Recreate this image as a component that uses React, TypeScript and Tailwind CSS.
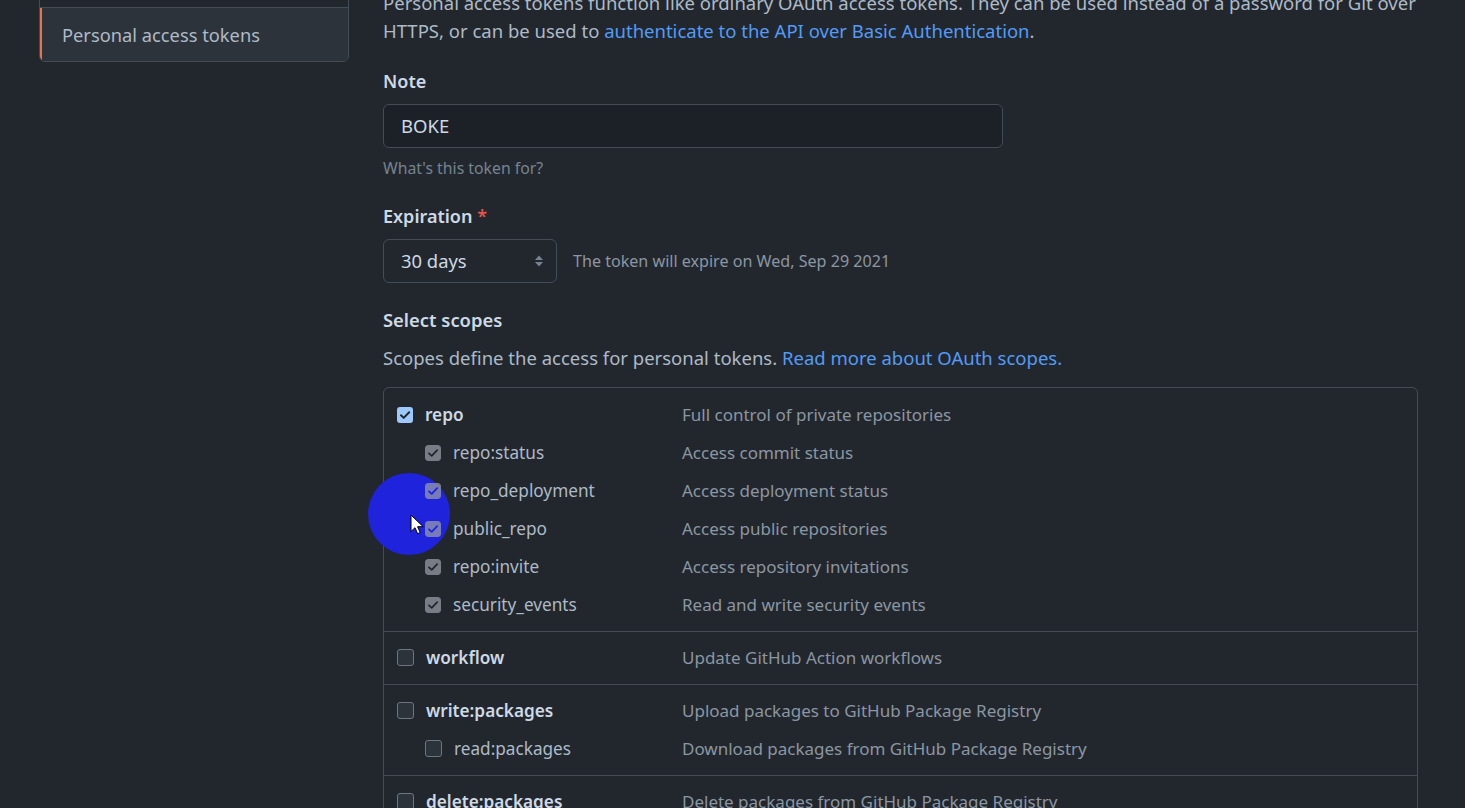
import React from 'react';

type Scope = { name: string; desc: string; state: 'on' | 'sub' | 'off'; child?: boolean };

const sections: Scope[][] = [
  [
    { name: 'repo', desc: 'Full control of private repositories', state: 'on' },
    { name: 'repo:status', desc: 'Access commit status', state: 'sub', child: true },
    { name: 'repo_deployment', desc: 'Access deployment status', state: 'sub', child: true },
    { name: 'public_repo', desc: 'Access public repositories', state: 'sub', child: true },
    { name: 'repo:invite', desc: 'Access repository invitations', state: 'sub', child: true },
    { name: 'security_events', desc: 'Read and write security events', state: 'sub', child: true },
  ],
  [{ name: 'workflow', desc: 'Update GitHub Action workflows', state: 'off' }],
  [
    { name: 'write:packages', desc: 'Upload packages to GitHub Package Registry', state: 'off' },
    { name: 'read:packages', desc: 'Download packages from GitHub Package Registry', state: 'off', child: true },
  ],
  [{ name: 'delete:packages', desc: 'Delete packages from GitHub Package Registry', state: 'off' }],
];

function Checkbox({ state, id }: { state: Scope['state']; id: string }) {
  if (state === 'on') {
    return (
      <svg width="16" height="16" viewBox="0 0 16 16" className="shrink-0">
        <rect width="16" height="16" rx="3" fill="#9ec9ff" />
        <path d="M4 8.3l2.7 2.6L12.2 5.2" stroke="#22272e" strokeWidth="2" fill="none" strokeLinecap="round" strokeLinejoin="round" />
      </svg>
    );
  }
  if (state === 'sub') {
    return (
      <svg width="16" height="16" viewBox="0 0 16 16" className="shrink-0">
        <defs>
          <mask id={id}>
            <rect width="16" height="16" rx="3" fill="white" />
            <path d="M4 8.3l2.7 2.6L12.2 5.2" stroke="black" strokeWidth="1.8" fill="none" strokeLinecap="round" strokeLinejoin="round" />
          </mask>
        </defs>
        <rect width="16" height="16" rx="3" fill="#9aa0a7" fillOpacity="0.72" mask={`url(#${id})`} />
      </svg>
    );
  }
  return <span className="block w-[17px] h-[17px] shrink-0 rounded-[3px] border border-[#6e7681] bg-[#2d333b]" />;
}

export default function App() {
  return (
    <div
      className="min-h-screen h-[808px] overflow-hidden bg-[#22272e] text-[#adbac7] flex"
      style={{ fontFamily: '"Noto Sans", "Open Sans", sans-serif' }}
    >
      {/* sidebar */}
      <div className="ml-[39px] w-[310px] shrink-0 -mt-[47px] self-start rounded-md border border-[#444c56] overflow-hidden">
        <div className="h-[54px] flex items-center pl-[22px] text-[18.3px] border-b border-[#444c56]">OAuth Apps</div>
        <div className="h-[53px] -ml-px flex items-center pl-[20px] border-l-[3px] border-[#e5774f] bg-[#2d333b] text-[18.3px]">
          Personal access tokens
        </div>
      </div>

      {/* main */}
      <div className="ml-[34px] w-[1035px] shrink-0 -mt-[11px]">
        <p className="text-[18.5px] leading-[28px] whitespace-nowrap">
          Personal access tokens function like ordinary OAuth access tokens. They can be used instead of a password for Git over
          <br />
          HTTPS, or can be used to <span className="text-[#539bf5]">authenticate to the API over Basic Authentication</span>.
        </p>

        <div className="mt-[24px] leading-[24px] text-[18px] font-semibold text-[#cdd9e5]">Note</div>
        <div className="mt-[11px] h-[44px] w-[620px] rounded-md border border-[#444c56] bg-[#1c2128] flex items-center px-[17px] text-[18.5px] text-[#cdd9e5]">
          BOKE
        </div>
        <div className="mt-[10px] leading-[20px] text-[15.8px] text-[#768390]">What's this token for?</div>

        <div className="mt-[26px] leading-[24px] text-[18px] font-semibold text-[#cdd9e5]">
          Expiration <span className="text-[#e5534b]">*</span>
        </div>
        <div className="mt-[11px] flex items-center gap-[16px]">
          <div className="h-[44px] w-[174px] rounded-md border border-[#444c56] bg-[#22272e] flex items-center justify-between pl-[17px] pr-[12px] text-[18.4px] text-[#cdd9e5]">
            30 days
            <svg width="10" height="16" viewBox="0 0 10 16">
              <path d="M5 2.5L9 7H1z" fill="#768390" />
              <path d="M5 13.5L1 9h8z" fill="#768390" />
            </svg>
          </div>
          <span className="text-[16.1px] text-[#8b96a2]">The token will expire on Wed, Sep 29 2021</span>
        </div>

        <div className="mt-[25px] leading-[24px] text-[18.4px] font-semibold text-[#cdd9e5]">Select scopes</div>
        <p className="mt-[12px] leading-[28px] text-[18.5px]">
          Scopes define the access for personal tokens. <span className="text-[#539bf5]">Read more about OAuth scopes.</span>
        </p>

        <div className="relative mt-[15px] rounded-t-md border border-[#444c56]">
          {/* screen-recording click highlight */}
          <div className="absolute left-[-16px] top-[85px] w-[82px] h-[82px] rounded-full bg-[#1f23dc] z-10" />
          {sections.map((sec, si) => (
            <div
              key={si}
              className={`relative z-20 pl-[13px] ${si === 0 ? 'pt-[8px] pb-[7px]' : 'py-[7px] border-t border-[#444c56]'}`}
            >
              {sec.map((s) => (
                <div key={s.name} className="h-[38px] grid grid-cols-[285px_1fr] items-center">
                  <div className={`flex items-center gap-[12px] ${s.child ? 'pl-[28px]' : ''}`}>
                    <Checkbox state={s.state} id={`cb-${s.name.replace(/[^a-z]/g, '')}`} />
                    <span
                      className={`text-[17.2px] ${s.child ? 'text-[#adbac7]' : 'font-semibold text-[#cdd9e5]'}`}
                    >
                      {s.name}
                    </span>
                  </div>
                  <span className="text-[17px] text-[#8b96a2]">{s.desc}</span>
                </div>
              ))}
            </div>
          ))}
          {/* mouse pointer */}
          <svg
            className="absolute left-[26px] top-[126px] z-30"
            width="14"
            height="22"
            viewBox="0 0 14 22"
          >
            <path d="M1 1v16.5l4-3.8 2.6 6 2.6-1.1-2.6-5.9h5.6z" fill="#fff" stroke="#000" strokeWidth="1" strokeLinejoin="round" />
          </svg>
        </div>
      </div>
    </div>
  );
}
